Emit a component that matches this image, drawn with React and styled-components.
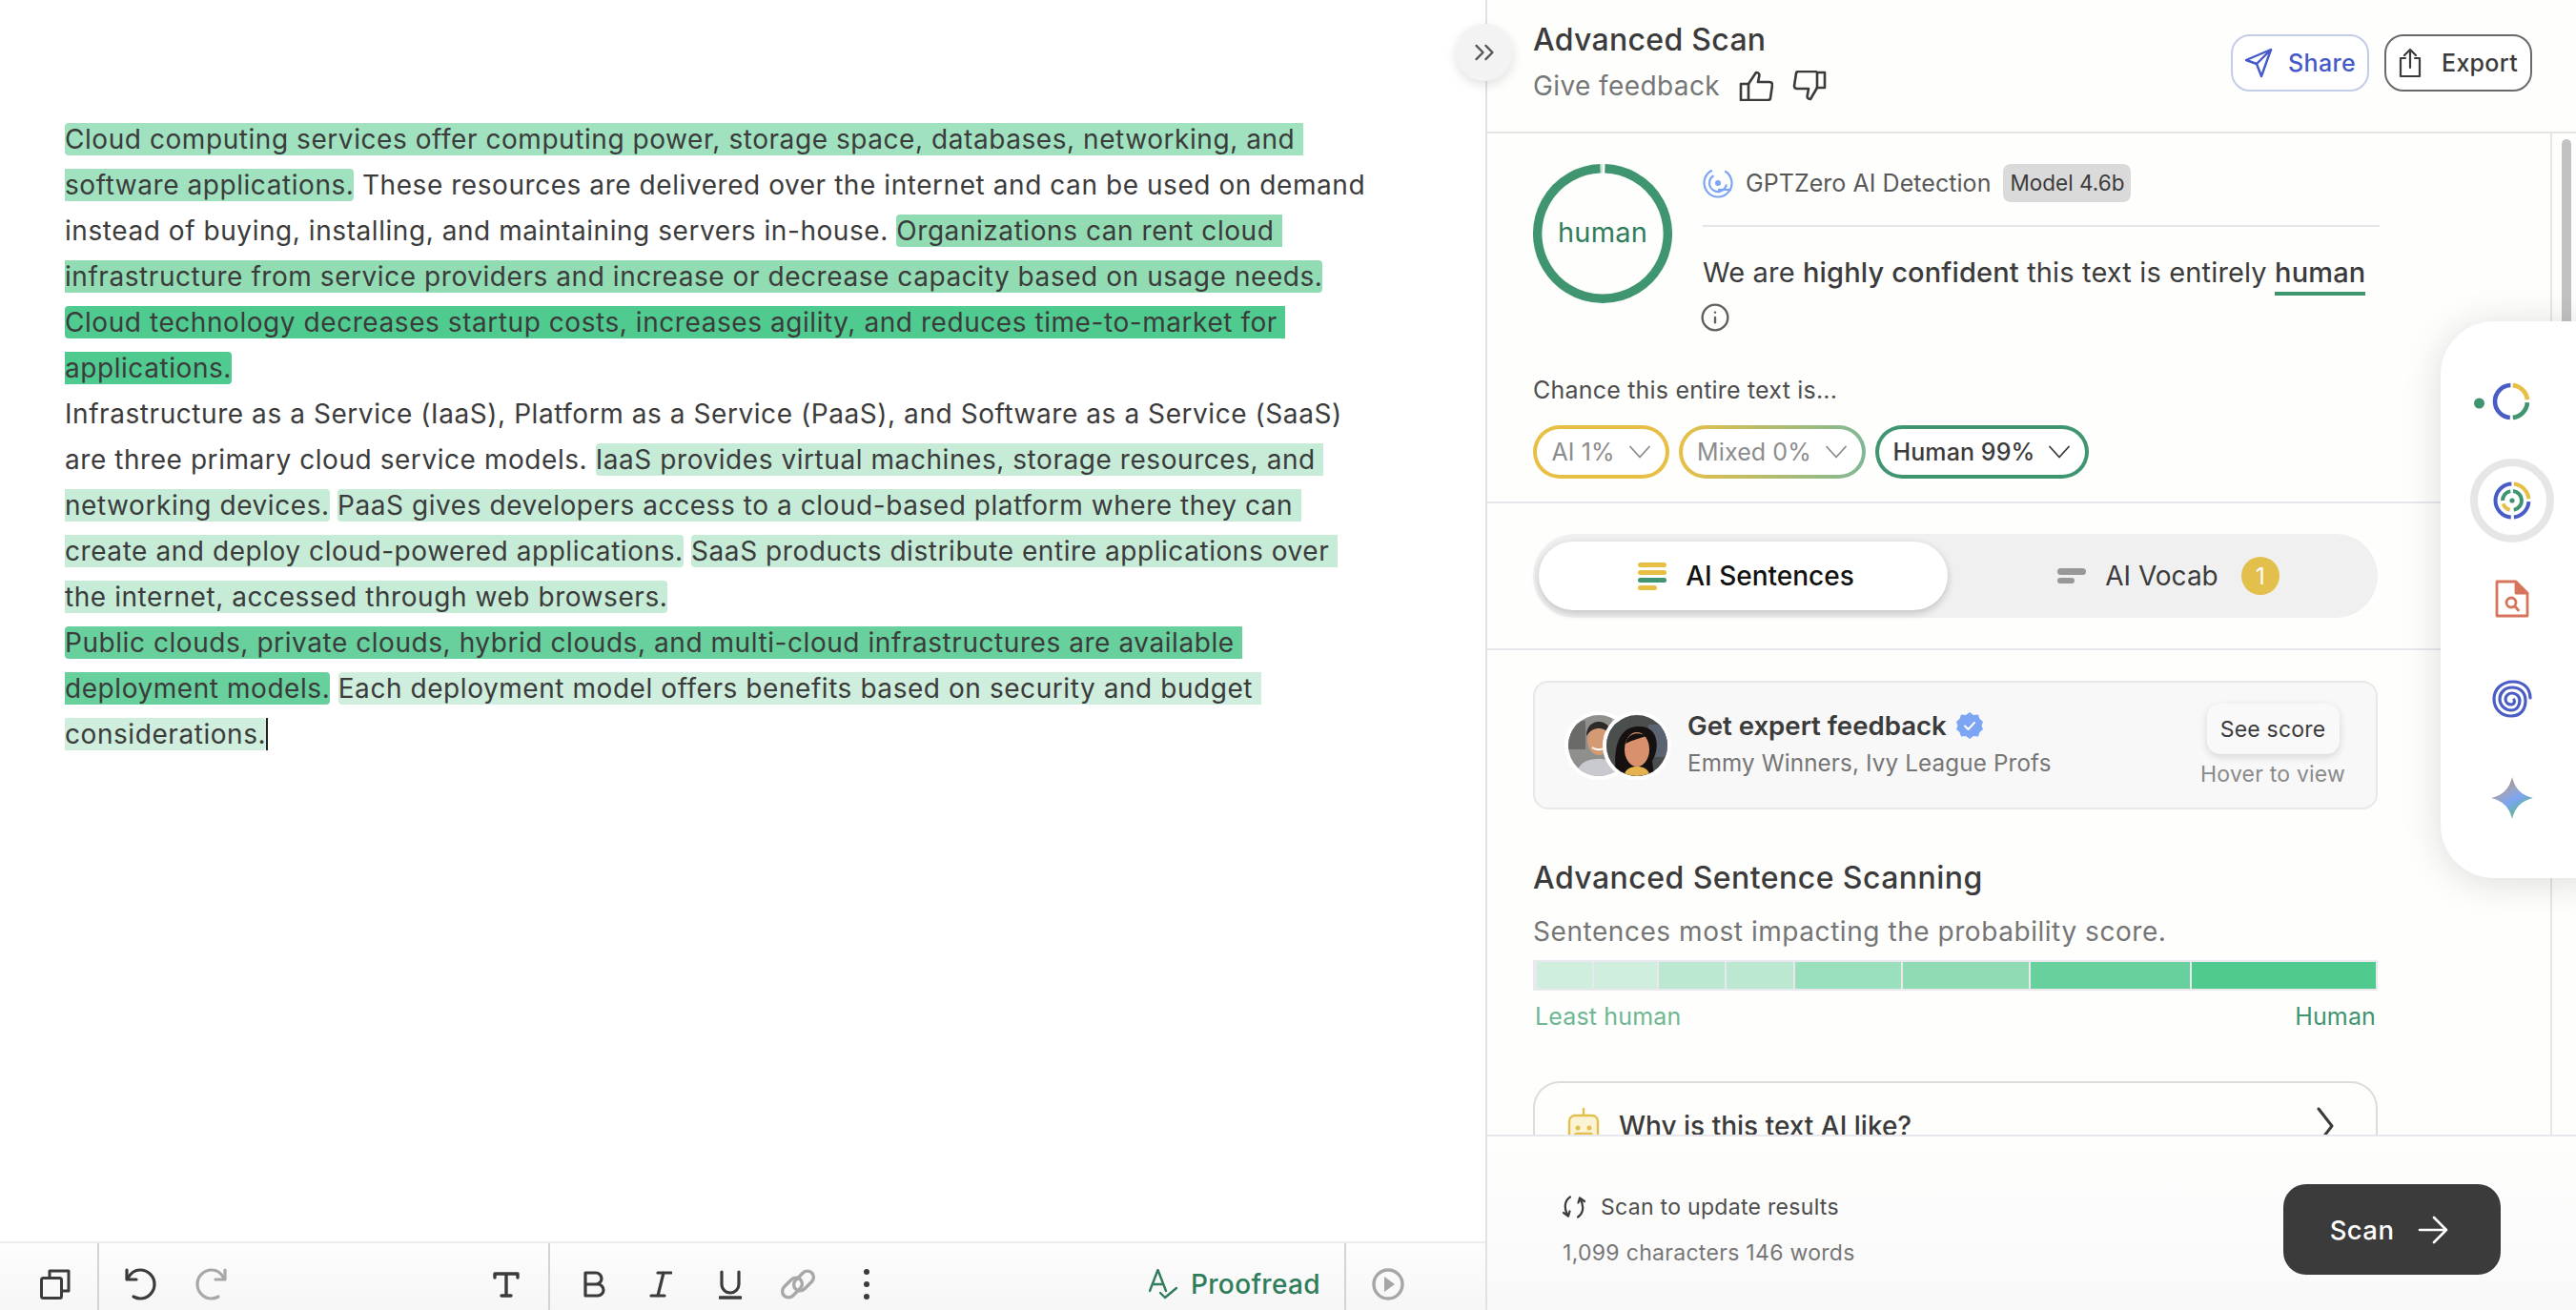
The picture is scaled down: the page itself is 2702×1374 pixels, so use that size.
import React from 'react';
import styled, { createGlobalStyle } from 'styled-components';
import { ChevronsRight, Info } from 'lucide-react';

const GlobalStyle = createGlobalStyle`
    html, body {
        margin: 0;
        padding: 0;
        height: 100%;
        overflow: hidden;
        background: #fff;
    }
    * { box-sizing: border-box; }
    body {
        font-family: Inter, "Liberation Sans", sans-serif;
        color: #3b3b3b;
    }
`;

const Page = styled.div`
    position: relative;
    display: flex;
    width: 2702px;
    height: 1374px;
    overflow: hidden;
`;

/* ---------- editor ---------- */

const EditorPane = styled.main`
    width: 1560px;
    flex-shrink: 0;
    display: flex;
    flex-direction: column;
    border-right: 2px solid #e2e2e2;
`;

const Editor = styled.div`
    flex: 1;
    padding: 122px 120px 0 68px;
    font-size: 28px;
    line-height: 48px;
    letter-spacing: 0.56px;
    color: #3b3b3b;
    white-space: pre-wrap;
`;

const Mark = styled.span`
    background: ${props => props.$color};
    border-radius: 4px;
`;

const Caret = styled.span`
    display: inline-block;
    width: 2px;
    height: 34px;
    background: #222;
    vertical-align: middle;
    margin-top: -4px;
`;

const Toolbar = styled.div`
    height: 72px;
    display: flex;
    align-items: stretch;
    border-top: 2px solid #ececec;
    background: linear-gradient(#fdfdfd, #f6f6f6);
`;

const ToolGroup = styled.div`
    width: ${props => props.$width}px;
    display: flex;
    align-items: center;
    padding: 16px ${props => props.$right || 0}px 0 ${props => props.$left}px;
    border-right: ${props => (props.$divider ? '2px solid #d4d4d4' : 'none')};
    & svg { flex-shrink: 0; }
`;

const ToolIcon = styled.span`
    display: flex;
    margin-left: ${props => props.$gap || 0}px;
`;

const ProofGroup = styled.div`
    display: flex;
    align-items: center;
    gap: 12px;
    margin-left: auto;
`;

const Proofread = styled.span`
    font-size: 28px;
    font-weight: 500;
    color: #2f7d5b;
    letter-spacing: 0.35px;
`;

/* ---------- side panel ---------- */

const SidePanel = styled.aside`
    flex: 1;
    min-width: 0;
    display: flex;
    flex-direction: column;
    background: #fefefd;
`;

const PanelHeader = styled.header`
    height: 140px;
    flex-shrink: 0;
    display: flex;
    justify-content: space-between;
    padding: 22px 46px 0 48px;
    border-bottom: 2px solid #e4e4e4;
`;

const PanelTitle = styled.h1`
    margin: 0;
    font-size: 32px;
    line-height: 40px;
    font-weight: 500;
    color: #3b3b3b;
    letter-spacing: 0.3px;
`;

const FeedbackRow = styled.div`
    display: flex;
    align-items: center;
    gap: 20px;
    margin-top: 8px;
    font-size: 28px;
    line-height: 40px;
    letter-spacing: 0.4px;
    color: #767676;
`;

const Thumbs = styled.div`
    display: flex;
    gap: 20px;
`;

const HeaderButtons = styled.div`
    display: flex;
    gap: 16px;
    margin-top: 14px;
`;

const HeaderButton = styled.button`
    height: 60px;
    width: ${props => props.$width}px;
    display: flex;
    align-items: center;
    justify-content: center;
    gap: ${props => props.$gap}px;
    padding: 0;
    border-radius: 20px;
    border: 2px solid ${props => props.$border};
    background: #fff;
    color: ${props => props.$color};
    font: 500 25px Inter, sans-serif;
    letter-spacing: 0.3px;
`;

const PanelBody = styled.div`
    flex: 1;
    min-height: 0;
    display: flex;
    overflow: hidden;
`;

const PanelScroll = styled.div`
    flex: 1;
    min-width: 0;
    overflow: hidden;
`;

const ScrollTrack = styled.div`
    width: 27px;
    flex-shrink: 0;
    padding: 6px 5px 0 10px;
    border-left: 2px solid #e6e6e6;
`;

const ScrollThumb = styled.div`
    height: 260px;
    border-radius: 6px;
    background: #c2c2c2;
`;

const Section = styled.section`
    padding: ${props => props.$padding};
    border-bottom: ${props => (props.$plain ? 'none' : '2px solid #e8e8ec')};
`;

const ScoreRow = styled.div`
    display: flex;
    gap: 32px;
`;

const RingBox = styled.div`
    position: relative;
    width: 146px;
    height: 146px;
    flex-shrink: 0;
    display: flex;
    align-items: center;
    justify-content: center;
`;

const RingSvg = styled.svg`
    position: absolute;
    inset: 0;
`;

const RingLabel = styled.span`
    margin-top: -4px;
    font-size: 29px;
    color: #2f7d5b;
    letter-spacing: 0.2px;
`;

const ScoreText = styled.div`
    width: 710px;
`;

const DetectorRow = styled.div`
    height: 66px;
    display: flex;
    align-items: flex-start;
    border-bottom: 2px solid #e6e6ec;
    font-size: 25px;
    line-height: 40px;
    letter-spacing: 0.05px;
    color: #585858;
`;

const LogoSlot = styled.span`
    display: flex;
    margin-top: 4px;
`;

const DetectorName = styled.span`
    margin: 0 13px 0 13px;
`;

const ModelBadge = styled.span`
    width: 134px;
    height: 40px;
    text-align: center;
    border-radius: 8px;
    background: #dadada;
    font-size: 22.5px;
    letter-spacing: 0;
    color: #3b3b3b;
    white-space: nowrap;
`;

const Verdict = styled.p`
    margin: 28px 0 0;
    font-size: 29px;
    line-height: 40px;
    letter-spacing: 0.15px;
`;

const Strong = styled.span`
    font-weight: 500;
`;

const HumanWord = styled.span`
    font-weight: 500;
    padding-bottom: 3px;
    border-bottom: 4px solid #3f956f;
`;

const InfoWrap = styled.div`
    height: 28px;
    margin: 11px 0 0 -3px;
    color: #606060;
`;

const ChanceLabel = styled.div`
    margin-top: 48px;
    font-size: 25px;
    line-height: 32px;
    letter-spacing: 0.2px;
    color: #4d4d4d;
`;

const Pills = styled.div`
    display: flex;
    gap: 10px;
    margin-top: 21px;
`;

const Pill = styled.div`
    height: 56px;
    width: ${props => props.$width}px;
    display: flex;
    align-items: center;
    justify-content: center;
    gap: 14px;
    border-radius: 28px;
    border: 4px solid transparent;
    background:
        linear-gradient(#fff, #fff) padding-box,
        ${props => props.$border} border-box;
    font-size: 25px;
    font-weight: ${props => (props.$active ? 500 : 400)};
    letter-spacing: 0.1px;
    color: ${props => (props.$active ? '#3b3b3b' : '#8c8c8c')};
`;

const Tabs = styled.div`
    height: 88px;
    width: 886px;
    display: flex;
    align-items: center;
    padding: 0 6px;
    border-radius: 44px;
    background: #f0f0f0;
`;

const Tab = styled.div`
    height: 72px;
    width: ${props => props.$width}px;
    display: flex;
    align-items: center;
    justify-content: center;
    gap: 20px;
    padding-left: ${props => props.$shift}px;
    border-radius: 36px;
    background: ${props => (props.$active ? '#fff' : 'transparent')};
    box-shadow: ${props => (props.$active ? '0 3px 8px rgba(0,0,0,0.2)' : 'none')};
    font-size: 28px;
    font-weight: ${props => (props.$active ? 500 : 400)};
    color: ${props => (props.$active ? '#111' : '#3b3b3b')};
`;

const CountBadge = styled.span`
    width: 40px;
    height: 40px;
    display: flex;
    align-items: center;
    justify-content: center;
    border-radius: 50%;
    background: #e3bf4b;
    color: #fff;
    font-size: 24px;
    margin-left: 4px;
`;

const ExpertCard = styled.div`
    width: 886px;
    height: 135px;
    display: flex;
    align-items: center;
    padding: 0 32px 0 31px;
    border: 2px solid #e8e8e8;
    border-radius: 16px;
    background: #f8f8f8;
`;

const Avatars = styled.div`
    display: flex;
    flex-shrink: 0;
    margin-right: 17px;
`;

const AvatarImage = styled.svg`
    display: block;
    width: 72px;
    height: 72px;
    border-radius: 50%;
    border: 4px solid #fff;
    margin-left: ${props => (props.$overlap ? '-32px' : '0')};
    position: relative;
`;

const ExpertText = styled.div`
    flex: 1;
    padding-bottom: 5px;
`;

const ExpertTitle = styled.div`
    display: flex;
    align-items: center;
    gap: 10px;
    font-size: 27.6px;
    line-height: 36px;
    font-weight: 600;
    color: #3b3b3b;
`;

const ExpertSub = styled.div`
    margin-top: 7px;
    font-size: 24.2px;
    line-height: 30px;
    letter-spacing: 0.15px;
    color: #757575;
`;

const ScoreAction = styled.div`
    display: flex;
    flex-direction: column;
    align-items: center;
    gap: 7px;
    padding-top: 1px;
`;

const SeeScore = styled.div`
    height: 53px;
    width: 139px;
    display: flex;
    align-items: center;
    justify-content: center;
    border-radius: 14px;
    background: #f9f9f9;
    box-shadow: 0 3px 8px rgba(0,0,0,0.14);
    font-size: 23px;
    letter-spacing: 0.2px;
    color: #3b3b3b;
`;

const HoverHint = styled.div`
    font-size: 23px;
    line-height: 28px;
    letter-spacing: 0.2px;
    color: #8a8a8a;
`;

const ScanHeading = styled.h2`
    margin: 52px 0 0;
    font-size: 32px;
    line-height: 40px;
    font-weight: 500;
    letter-spacing: 0.45px;
    color: #3b3b3b;
`;

const ScanSub = styled.p`
    margin: 16px 0 0;
    font-size: 28px;
    line-height: 40px;
    letter-spacing: 0.55px;
    color: #757575;
`;

const ScoreBar = styled.div`
    width: 886px;
    height: 32px;
    margin-top: 10px;
    display: flex;
    gap: 2px;
    padding: 2px 2px 2px 4px;
    background: #e8e8ee;
`;

const BarPiece = styled.div`
    flex-grow: ${props => props.$size};
    flex-basis: 0;
    background: ${props => props.$color};
`;

const BarLabels = styled.div`
    display: flex;
    justify-content: space-between;
    width: 886px;
    padding: 0 2px;
    margin-top: 11px;
    font-size: 25px;
    line-height: 32px;
    letter-spacing: 0.15px;
`;

const BarLabel = styled.span`
    color: ${props => props.$color};
`;

const WhyCard = styled.div`
    width: 886px;
    height: 120px;
    margin-top: 52px;
    display: flex;
    align-items: flex-start;
    padding: 25px 44px 0 34px;
    gap: 20px;
    border: 2px solid #dcdcdc;
    border-bottom: none;
    border-radius: 28px 28px 0 0;
    font-size: 28px;
    font-weight: 500;
    line-height: 40px;
    color: #3b3b3b;
`;

const WhyText = styled.span`
    flex: 1;
`;

const PanelFooter = styled.footer`
    height: 184px;
    flex-shrink: 0;
    display: flex;
    justify-content: space-between;
    padding: 50px 79px 0 79px;
    border-top: 2px solid #e8e8ec;
    background: linear-gradient(#fefefd, #f9f9f9);
`;

const FooterText = styled.div`
    padding-top: 10px;
`;

const UpdateRow = styled.div`
    display: flex;
    align-items: center;
    gap: 16px;
    font-size: 23px;
    line-height: 28px;
    letter-spacing: 0.3px;
    color: #4d4d4d;
`;

const Counts = styled.div`
    margin-top: 20px;
    font-size: 23px;
    line-height: 28px;
    letter-spacing: 0.3px;
    color: #767676;
`;

const ScanButton = styled.button`
    width: 228px;
    height: 95px;
    display: flex;
    align-items: center;
    justify-content: center;
    gap: 25px;
    padding: 0 6px 0 0;
    border: none;
    border-radius: 24px;
    background: #3b3b3b;
    color: #fff;
    font: 500 27.5px Inter, sans-serif;
    letter-spacing: 0.4px;
`;

/* ---------- overlays ---------- */

const CollapseButton = styled.div`
    position: absolute;
    left: 1527px;
    top: 25px;
    width: 60px;
    height: 60px;
    display: flex;
    align-items: center;
    justify-content: center;
    border-radius: 50%;
    background: #f3f3f3;
    box-shadow: 0 4px 12px rgba(0,0,0,0.12);
    color: #555;
`;

const Rail = styled.nav`
    position: absolute;
    left: 2560px;
    top: 337px;
    width: 160px;
    height: 584px;
    display: flex;
    flex-direction: column;
    align-items: flex-start;
    padding: 56px 0 0 29px;
    border-radius: 56px 0 0 56px;
    background: #fff;
    box-shadow: 0 4px 40px rgba(0,0,0,0.14);
`;

const RailItem = styled.div`
    width: 94px;
    height: ${props => props.$height}px;
    display: flex;
    align-items: center;
    justify-content: center;
    flex-shrink: 0;
    margin: ${props => props.$top || 0}px 0 0 ${props => props.$left || -1}px;
`;

const RailActive = styled.div`
    width: 88px;
    height: 88px;
    display: flex;
    align-items: center;
    justify-content: center;
    border: 8px solid #e6e6e6;
    border-radius: 50%;
`;

/* ---------- drawings ---------- */

const arc = (cx, cy, r, from, to) => {
    const rad = a => ((a - 90) * Math.PI) / 180;
    const x0 = cx + r * Math.cos(rad(from));
    const y0 = cy + r * Math.sin(rad(from));
    const x1 = cx + r * Math.cos(rad(to));
    const y1 = cy + r * Math.sin(rad(to));
    const large = to - from > 180 ? 1 : 0;
    return `M${x0} ${y0}A${r} ${r} 0 ${large} 1 ${x1} ${y1}`;
};

const BLUE = '#4a5cc5';
const YELLOW = '#e8bf45';
const GREEN = '#3f956f';

const CopyIcon = () => (
    <svg width="32" height="32" viewBox="0 0 32 32" fill="none" stroke="#3b3b3b" strokeWidth="3" strokeLinejoin="round">
        <rect x="1.5" y="9.5" width="21" height="21" rx="2" />
        <path d="M10 9V2h20v21h-7" />
    </svg>
);

const UndoIcon = () => (
    <svg width="34" height="34" viewBox="0 0 34 34" fill="none" stroke="#3b3b3b" strokeWidth="3.2" strokeLinecap="round" strokeLinejoin="round">
        <path d="M4 11C7 5 12 2 17 2a15 15 0 0 1 0 30c-3 0-5-1-7-2" />
        <path d="M3 2v10h10" />
    </svg>
);

const RedoIcon = () => (
    <svg width="34" height="34" viewBox="0 0 34 34" fill="none" stroke="#a8a8a8" strokeWidth="3.2" strokeLinecap="round" strokeLinejoin="round">
        <path d="M30 11C27 5 22 2 17 2a15 15 0 0 0 0 30c3 0 5-1 7-2" />
        <path d="M31 2v10H21" />
    </svg>
);

const TextIcon = () => (
    <svg width="28" height="28" viewBox="0 0 28 28" fill="none" stroke="#3b3b3b" strokeWidth="3.4" strokeLinecap="round" strokeLinejoin="round">
        <path d="M2 7V3h24v4M14 3v23M9 26h10" />
    </svg>
);

const BoldIcon = () => (
    <svg width="24" height="28" viewBox="0 0 24 28" fill="none" stroke="#3b3b3b" strokeWidth="3.2" strokeLinejoin="round">
        <path d="M2 2h11a6 6 0 0 1 0 12H2zM2 14h13a6 6 0 0 1 0 12H2z" />
    </svg>
);

const ItalicIcon = () => (
    <svg width="24" height="28" viewBox="0 0 24 28" fill="none" stroke="#3b3b3b" strokeWidth="3.2" strokeLinecap="round">
        <path d="M9 2h14M2 26h14M15 2L9 26" />
    </svg>
);

const UnderlineIcon = () => (
    <svg width="24" height="31" viewBox="0 0 24 31" fill="none" stroke="#3b3b3b" strokeWidth="3.2" strokeLinecap="round">
        <path d="M3 2v13a9 9 0 0 0 18 0V2" />
        <path d="M1 29h22" strokeWidth="3.6" />
    </svg>
);

const LinkIcon = () => (
    <svg width="38" height="34" viewBox="0 0 38 34" fill="none" stroke="#a8a8a8" strokeWidth="3.4">
        <rect x="1" y="14" width="24" height="13" rx="6.500" transform="rotate(-45 13 20.500)" />
        <rect x="13" y="7" width="24" height="13" rx="6.500" transform="rotate(-45 25 13.500)" />
    </svg>
);

const DotsIcon = () => (
    <svg width="6" height="32" viewBox="0 0 6 32" fill="#3b3b3b">
        <circle cx="3" cy="3" r="3" />
        <circle cx="3" cy="16" r="3" />
        <circle cx="3" cy="29" r="3" />
    </svg>
);

const ProofIcon = () => (
    <svg width="32" height="32" viewBox="0 0 32 32" fill="none" stroke="#2f7d5b" strokeWidth="2.4" strokeLinecap="round" strokeLinejoin="round">
        <path d="M1 23L9.5 1L18 23M4 16h11" />
        <path d="M12 25l5 5 12-10" />
    </svg>
);

const PlayIcon = () => (
    <svg width="34" height="34" viewBox="0 0 34 34">
        <circle cx="17" cy="17" r="15" fill="none" stroke="#a6a6a6" strokeWidth="3.4" />
        <path d="M13 9l11 8-11 8z" fill="#a6a6a6" />
    </svg>
);

const ThumbUp = () => (
    <svg width="36" height="32" viewBox="0 0 36 32" fill="none" stroke="#3b3b3b" strokeWidth="2.6" strokeLinejoin="round">
        <path d="M2 14h8v17H2z" />
        <path d="M10 14L18 2c3 0 4 2 3 5l-1 5h12c2 0 3 1 3 3l-2 14c0 1-1 2-3 2H10" />
    </svg>
);

const ThumbDown = () => (
    <svg width="36" height="32" viewBox="0 0 36 32" fill="none" stroke="#3b3b3b" strokeWidth="2.6" strokeLinejoin="round">
        <path d="M34 2v16h-8V2z" />
        <path d="M26 18l-7 12c-3 0-4-2-3-5l1-6H5c-2 0-3-1-3-3l2-13c0-1 1-2 3-2h19" />
    </svg>
);

const ShareIcon = () => (
    <svg width="30" height="32" viewBox="0 0 30 32" fill="none" stroke="#4659c9" strokeWidth="2.4" strokeLinejoin="round">
        <path d="M2 13L28 2L18 30L13 17z" />
        <path d="M13 17L28 2" />
    </svg>
);

const ExportIcon = () => (
    <svg width="24" height="32" viewBox="0 0 24 32" fill="none" stroke="#3b3b3b" strokeWidth="2.2" strokeLinecap="round" strokeLinejoin="round">
        <path d="M7 11H2v19h20V11h-5" />
        <path d="M12 21V2M6 8l6-6 6 6" />
    </svg>
);

const GptLogo = () => (
    <svg width="32" height="32" viewBox="0 0 32 32" fill="none" stroke="#7ca5f4" strokeWidth="2.2">
        <path d={arc(16, 16, 14.5, 30, 335)} />
        <path d={arc(16, 16, 9, 100, 330)} />
        <path d="M16 23h14" />
        <circle cx="16" cy="16" r="3" fill="#7ca5f4" stroke="none" />
    </svg>
);

const PillChevron = () => (
    <svg width="24" height="14" viewBox="0 0 24 14" fill="none" stroke="currentColor" strokeWidth="1.8" strokeLinecap="round" strokeLinejoin="round">
        <path d="M2 1.500L12 12.500L22 1.500" />
    </svg>
);

const WhyChevron = () => (
    <svg width="18" height="40" viewBox="0 0 18 40" fill="none" stroke="#3b3b3b" strokeWidth="3" strokeLinecap="round" strokeLinejoin="round">
        <path d="M2 2L16 20L2 38" />
    </svg>
);

const SentencesIcon = () => (
    <svg width="30" height="30" viewBox="0 0 30 30">
        <rect x="0" y="1" width="30" height="5" rx="2.5" fill={YELLOW} />
        <rect x="0" y="9" width="30" height="5" rx="2.5" fill={YELLOW} />
        <rect x="0" y="17" width="30" height="5" rx="2.5" fill={GREEN} />
        <rect x="0" y="25" width="20" height="5" rx="2.5" fill={YELLOW} />
    </svg>
);

const VocabIcon = () => (
    <svg width="30" height="20" viewBox="0 0 30 20">
        <rect x="0" y="2" width="30" height="7" rx="3.5" fill="#969996" />
        <rect x="0" y="12" width="18" height="6" rx="3" fill="#969996" />
    </svg>
);

const VerifiedBadge = () => (
    <svg width="28" height="28" viewBox="0 0 28 28">
        <path d="M14 0l4 3 5-.5 1.5 4.500 3.500 3-1.500 4 1.500 4-3.500 3-1.500 4.500-5-.5-4 3-4-3-5 .5-1.500-4.500-3.500-3 1.500-4-1.500-4 3.500-3L5 2.500l5 .5z" fill="#7ca5f4" />
        <path d="M9 14.500l3.500 3.500 6.500-7" fill="none" stroke="#fff" strokeWidth="2" strokeLinecap="round" strokeLinejoin="round" />
    </svg>
);

const PortraitA = () => (
    <AvatarImage viewBox="0 0 64 64">
        <rect width="64" height="64" fill="#8f8f8c" />
        <rect x="0" y="6" width="18" height="30" fill="#6a6a68" />
        <rect x="46" y="4" width="18" height="26" fill="#b2b2ae" />
        <path d="M8 64c2-14 12-18 24-18s22 4 24 18z" fill="#c8cad0" />
        <ellipse cx="32" cy="26" rx="12" ry="16" fill="#d49a74" />
        <path d="M19 22c0-12 8-15 13-15s13 3 13 15c-4-6-8-8-13-8s-9 2-13 8z" fill="#2e2a28" />
        <path d="M25 34c4 3 10 3 14 0" stroke="#fff" strokeWidth="2" fill="none" />
    </AvatarImage>
);

const PortraitB = () => (
    <AvatarImage $overlap viewBox="0 0 64 64">
        <rect width="64" height="64" fill="#4a4e4c" />
        <rect x="44" y="10" width="20" height="34" fill="#5b6470" />
        <path d="M10 64c-2-20-2-50 22-52s24 24 16 36l2 16z" fill="#141110" />
        <ellipse cx="32" cy="36" rx="13" ry="18" fill="#d8916c" />
        <path d="M20 30c2-10 12-14 22-8-6 2-14 4-22 8z" fill="#141110" />
        <path d="M18 64c2-8 8-10 14-10s12 2 14 10z" fill="#e6b24f" />
    </AvatarImage>
);

const RobotIcon = () => (
    <svg width="34" height="46" viewBox="0 0 34 46" fill="none" stroke="#e3bf4b" strokeWidth="2.4">
        <path d="M17 1v8" />
        <rect x="2" y="9" width="30" height="34" rx="6" fill="#fbf3d6" />
        <circle cx="11" cy="22" r="2.500" fill="#e3bf4b" stroke="none" />
        <circle cx="23" cy="22" r="2.500" fill="#e3bf4b" stroke="none" />
        <rect x="8" y="28" width="18" height="9" rx="2" />
    </svg>
);

const RefreshIcon = () => (
    <svg width="24" height="24" viewBox="0 0 24 24" fill="none" stroke="#3b3b3b" strokeWidth="2.2" strokeLinecap="round" strokeLinejoin="round">
        <path d="M8 1.500C2 5 1 14 6 21" />
        <path d="M1 18l5 3.500 1.500-5" />
        <path d="M16 22.500C22 19 23 10 18 3" />
        <path d="M23 6l-5-3.500L16.500 7.500" />
    </svg>
);

const ScanArrow = () => (
    <svg width="32" height="32" viewBox="0 0 32 32" fill="none" stroke="#fff" strokeWidth="2.6" strokeLinecap="round" strokeLinejoin="round">
        <path d="M2 16h28M17 3l13 13-13 13" />
    </svg>
);

const RingDots = () => (
    <svg width="58" height="40" viewBox="0 0 58 40" fill="none" strokeWidth="4.6">
        <circle cx="5.500" cy="22" r="5.500" fill={GREEN} />
        <path d={arc(39, 20, 17, 184, 358)} stroke={BLUE} />
        <path d={arc(39, 20, 17, 6, 84)} stroke={YELLOW} />
        <path d={arc(39, 20, 17, 94, 174)} stroke={GREEN} />
    </svg>
);

const RingsIcon = () => (
    <svg width="40" height="40" viewBox="0 0 40 40" fill="none" strokeWidth="4">
        <path d={arc(20, 20, 17.500, 184, 358)} stroke={BLUE} />
        <path d={arc(20, 20, 17.500, 94, 174)} stroke={BLUE} />
        <path d={arc(20, 20, 17.500, 6, 84)} stroke={YELLOW} />
        <path d={arc(20, 20, 10, 6, 170)} stroke={GREEN} />
        <path d={arc(20, 20, 10, 194, 250)} stroke={YELLOW} />
        <path d={arc(20, 20, 10, 270, 350)} stroke={GREEN} />
        <circle cx="20" cy="20" r="2.600" fill={GREEN} />
    </svg>
);

const DocSearchIcon = () => (
    <svg width="36" height="40" viewBox="0 0 36 40" fill="none" stroke="#d4755c" strokeWidth="2.800" strokeLinejoin="round">
        <path d="M2 2h20l12 12v24H2z" />
        <path d="M22 2v12h12" fill="#d4755c" />
        <circle cx="17" cy="24" r="5" />
        <path d="M21 28l3.500 4" strokeLinecap="round" />
    </svg>
);

const SpiralIcon = () => (
    <svg width="42" height="40" viewBox="0 0 42 40" fill="none" stroke={BLUE} strokeWidth="3.200" strokeLinecap="round">
        <path d="M40 19C40 8 32 2 22 2C10 2 2 10 2 20C2 31 10 38 20 38C30 38 35 31 35 22C35 13 29 8 21 8C13 8 8 14 8 20C8 27 14 32 20 32C26 32 29 27 29 22C29 17 25 14 21 14C17 14 14 17 14 20C14 24 17 26 20 26C23 26 24 23 23 21" />
    </svg>
);

const SparkleIcon = () => (
    <svg width="44" height="44" viewBox="0 0 44 44">
        <defs>
            <linearGradient id="spark" x1="0.2" y1="0" x2="0.8" y2="1">
                <stop offset="0.12" stopColor="#b08f8c" />
                <stop offset="0.35" stopColor="#9aa4c4" />
                <stop offset="0.55" stopColor="#7ca5f4" />
                <stop offset="0.85" stopColor="#62b58e" />
            </linearGradient>
        </defs>
        <path d="M22 0Q26 18 44 22Q26 26 22 44Q18 26 0 22Q18 18 22 0z" fill="url(#spark)" />
    </svg>
);

const bars = [
    { size: 58, color: '#cfeedd' },
    { size: 66, color: '#cfeedd' },
    { size: 69, color: '#bce8d1' },
    { size: 70, color: '#bce8d1' },
    { size: 111, color: '#9be0bd' },
    { size: 132, color: '#8fdcb4' },
    { size: 167, color: '#67d09d' },
    { size: 193, color: '#4fcb90' },
];

const App = () => {
    return (
        <Page>
            <GlobalStyle />
            <EditorPane>
                <Editor>
                    <div>
                        <Mark $color="#a0e2bf">Cloud computing services offer computing power, storage space, databases, networking, and software applications.</Mark>
                        {' These resources are delivered over the internet and can be used on demand instead of buying, installing, and maintaining servers in-house. '}
                        <Mark $color="#92dcb4">Organizations can rent cloud infrastructure from service providers and increase or decrease capacity based on usage needs.</Mark>
                        {' '}
                        <Mark $color="#50cb90">Cloud technology decreases startup costs, increases agility, and reduces time-to-market for applications.</Mark>
                    </div>
                    <div>
                        {'Infrastructure as a Service (IaaS), Platform as a Service (PaaS), and Software as a Service (SaaS) are three primary cloud service models. '}
                        <Mark $color="#c6ecd8">IaaS provides virtual machines, storage resources, and networking devices.</Mark>
                        {' '}
                        <Mark $color="#c6ecd8">PaaS gives developers access to a cloud-based platform where they can create and deploy cloud-powered applications.</Mark>
                        {' '}
                        <Mark $color="#c6ecd8">SaaS products distribute entire applications over the internet, accessed through web browsers.</Mark>
                    </div>
                    <div>
                        <Mark $color="#67d09d">Public clouds, private clouds, hybrid clouds, and multi-cloud infrastructures are available deployment models.</Mark>
                        {' '}
                        <Mark $color="#cfeedd">Each deployment model offers benefits based on security and budget considerations.</Mark>
                        <Caret />
                    </div>
                </Editor>
                <Toolbar>
                    <ToolGroup $width={104} $left={42} $divider><CopyIcon /></ToolGroup>
                    <ToolGroup $width={473} $left={26} $right={30} $divider>
                        <UndoIcon />
                        <ToolIcon $gap={41}><RedoIcon /></ToolIcon>
                        <ProofGroup><TextIcon /></ProofGroup>
                    </ToolGroup>
                    <ToolGroup $width={835} $left={35} $right={25} $divider>
                        <BoldIcon />
                        <ToolIcon $gap={45}><ItalicIcon /></ToolIcon>
                        <ToolIcon $gap={49}><UnderlineIcon /></ToolIcon>
                        <ToolIcon $gap={40}><LinkIcon /></ToolIcon>
                        <ToolIcon $gap={50}><DotsIcon /></ToolIcon>
                        <ProofGroup>
                            <ProofIcon />
                            <Proofread>Proofread</Proofread>
                        </ProofGroup>
                    </ToolGroup>
                    <ToolGroup $width={146} $left={27}><PlayIcon /></ToolGroup>
                </Toolbar>
            </EditorPane>

            <SidePanel>
                <PanelHeader>
                    <div>
                        <PanelTitle>Advanced Scan</PanelTitle>
                        <FeedbackRow>
                            Give feedback
                            <Thumbs><ThumbUp /><ThumbDown /></Thumbs>
                        </FeedbackRow>
                    </div>
                    <HeaderButtons>
                        <HeaderButton $width={145} $gap={16} $border="#c4cde8" $color="#4659c9"><ShareIcon />Share</HeaderButton>
                        <HeaderButton $width={155} $gap={21} $border="#6a6a6a" $color="#3b3b3b"><ExportIcon />Export</HeaderButton>
                    </HeaderButtons>
                </PanelHeader>
                <PanelBody>
                    <PanelScroll>
                        <Section $padding="32px 0 24px 48px">
                            <ScoreRow>
                                <RingBox>
                                    <RingSvg width="146" height="146" viewBox="0 0 146 146" fill="none">
                                        <path d={arc(73, 73, 68.3, 2, 358)} stroke={GREEN} strokeWidth="9.400" />
                                        <path d={arc(73, 73, 68.3, 358.2, 359.9)} stroke="#c9e0d5" strokeWidth="9.400" />
                                    </RingSvg>
                                    <RingLabel>human</RingLabel>
                                </RingBox>
                                <ScoreText>
                                    <DetectorRow>
                                        <LogoSlot><GptLogo /></LogoSlot>
                                        <DetectorName>GPTZero AI Detection</DetectorName>
                                        <ModelBadge>Model 4.6b</ModelBadge>
                                    </DetectorRow>
                                    <Verdict>
                                        We are <Strong>highly confident</Strong> this text is entirely <HumanWord>human</HumanWord>
                                    </Verdict>
                                    <InfoWrap><Info size={32} strokeWidth={1.8} /></InfoWrap>
                                </ScoreText>
                            </ScoreRow>
                            <ChanceLabel>Chance this entire text is...</ChanceLabel>
                            <Pills>
                                <Pill $width={143} $border={YELLOW}>AI 1%<PillChevron /></Pill>
                                <Pill $width={196} $border={`linear-gradient(90deg, ${YELLOW}, #7fb897)`}>Mixed 0%<PillChevron /></Pill>
                                <Pill $width={224} $border={GREEN} $active>Human 99%<PillChevron /></Pill>
                            </Pills>
                        </Section>
                        <Section $padding="32px 0 32px 48px">
                            <Tabs>
                                <Tab $active $width={429} $shift={6}><SentencesIcon />AI Sentences</Tab>
                                <Tab $width={445} $shift={18}><VocabIcon />AI Vocab<CountBadge>1</CountBadge></Tab>
                            </Tabs>
                        </Section>
                        <Section $plain $padding="32px 0 0 48px">
                            <ExpertCard>
                                <Avatars><PortraitA /><PortraitB /></Avatars>
                                <ExpertText>
                                    <ExpertTitle>Get expert feedback<VerifiedBadge /></ExpertTitle>
                                    <ExpertSub>Emmy Winners, Ivy League Profs</ExpertSub>
                                </ExpertText>
                                <ScoreAction>
                                    <SeeScore>See score</SeeScore>
                                    <HoverHint>Hover to view</HoverHint>
                                </ScoreAction>
                            </ExpertCard>
                            <ScanHeading>Advanced Sentence Scanning</ScanHeading>
                            <ScanSub>Sentences most impacting the probability score.</ScanSub>
                            <ScoreBar>
                                {bars.map((bar, i) => <BarPiece key={i} $size={bar.size} $color={bar.color} />)}
                            </ScoreBar>
                            <BarLabels>
                                <BarLabel $color="#6fb894">Least human</BarLabel>
                                <BarLabel $color={GREEN}>Human</BarLabel>
                            </BarLabels>
                            <WhyCard>
                                <RobotIcon />
                                <WhyText>Why is this text AI like?</WhyText>
                                <WhyChevron />
                            </WhyCard>
                        </Section>
                    </PanelScroll>
                    <ScrollTrack><ScrollThumb /></ScrollTrack>
                </PanelBody>
                <PanelFooter>
                    <FooterText>
                        <UpdateRow><RefreshIcon />Scan to update results</UpdateRow>
                        <Counts>1,099 characters 146 words</Counts>
                    </FooterText>
                    <ScanButton>Scan<ScanArrow /></ScanButton>
                </PanelFooter>
            </SidePanel>

            <CollapseButton><ChevronsRight size={34} strokeWidth={1.6} /></CollapseButton>

            <Rail>
                <RailItem $height={56} $left={-12}><RingDots /></RailItem>
                <RailItem $height={104} $top={24}><RailActive><RingsIcon /></RailActive></RailItem>
                <RailItem $height={56} $top={23}><DocSearchIcon /></RailItem>
                <RailItem $height={56} $top={49}><SpiralIcon /></RailItem>
                <RailItem $height={56} $top={48}><SparkleIcon /></RailItem>
            </Rail>
        </Page>
    );
};

export default App;
